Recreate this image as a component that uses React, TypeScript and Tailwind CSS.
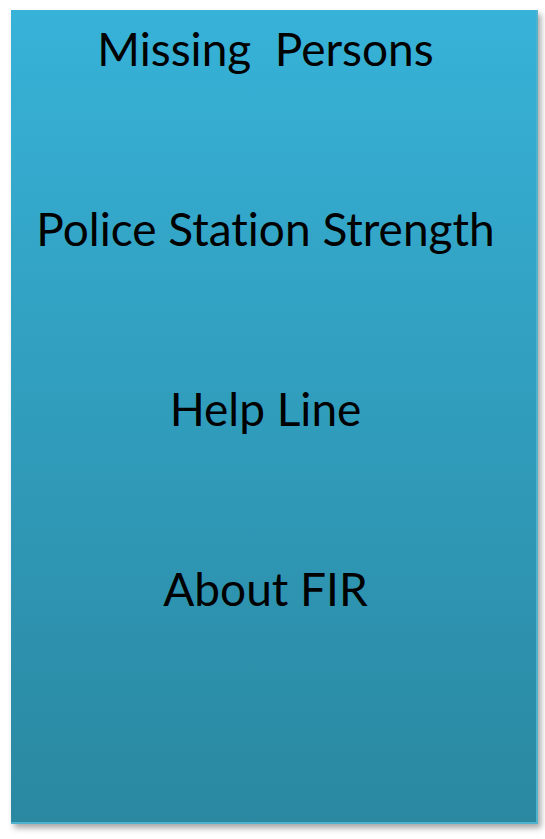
const items = ["Missing  Persons", "Police Station Strength", "Help Line", "About FIR"];

export default function App() {
  return (
    <div className="w-[545px] h-[839px] bg-white pl-[11px] pt-[10px]">
      <div className="w-[527px] h-[814px] bg-gradient-to-b from-[#37b2d8] to-[#2a88a1] border-r-2 border-b-2 border-[#4fb3cf] shadow-[3px_4px_6px_rgba(0,0,0,0.35)] flex flex-col items-center pt-[16px] pr-[16px] gap-[134px] font-['Lato',sans-serif] text-black [font-variant-ligatures:none]">
        {items.map((t) => (
          <p key={t} className="text-[46px] leading-[46px] whitespace-pre">{t}</p>
        ))}
      </div>
    </div>
  );
}
